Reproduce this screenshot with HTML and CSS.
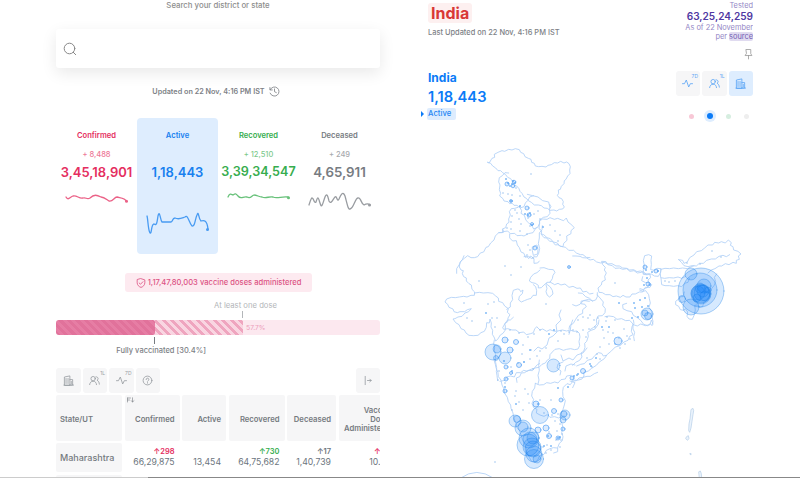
FILE: index.html
```html
<!DOCTYPE html>
<html lang="en">
<head>
<meta charset="utf-8">
<title>India – COVID-19 tracker</title>
<link rel="stylesheet" href="styles.css">
</head>
<body>
<svg width="0" height="0" class="defs">
  <defs>
    <symbol id="building" viewBox="0 0 12 12"><path d="M1.5 11V2.2L7.5 1v10zM7.5 5h3v6h-3M1 11h10.500M3.300 3.800v5.500M5.500 3.800v5.500M9 7v2.500"/></symbol>
    <symbol id="people" viewBox="0 0 12 12"><circle cx="4.500" cy="4" r="2.400"/><path d="M.7 10.500c.3-2.200 1.500-3.700 3.800-3.700s3.500 1.500 3.700 3.700M7.500 2c2.400-.5 3.500 2.800 1.200 3.800 1.500.5 2.400 1.900 2.600 4.200"/></symbol>
    <symbol id="pulse" viewBox="0 0 12 12"><path d="M.5 6.200h2.200l2-4 2.600 7.600 1.800-3.600h2.400"/></symbol>
  </defs>
</svg>
<main class="page">
  <section class="summary">
    <p class="search-label">Search your district or state</p>
    <div class="search">
      <svg class="search-icon" viewBox="0 0 14 14"><circle cx="6.500" cy="6.500" r="5.300"/><path d="M10.300 10.300l2.400 2.400"/></svg>
    </div>
    <div class="updated"><span>Updated on 22 Nov, 4:16 PM IST</span>
      <svg viewBox="0 0 12 12"><path d="M1.300 4A5 5 0 1 1 1.200 7.800M1 1.700v2.600h2.600M6 3.200v3l2 1"/></svg>
    </div>
    <div class="stats">
      <div class="stat confirmed"><h2>Confirmed</h2><small>+ 8,488</small><strong>3,45,18,901</strong>
        <svg viewBox="0 0 81 60"><path d="M10 9c2 4 4 0 7-1 4-1 6 3 10 2 3-1 4 2 7 0 4-4 7-3 11-1 3 0 5 2 8 4 4 1 5-4 8-4 4 1 8 1 9 4"/><circle cx="70.500" cy="13.300" r="1.500"/></svg></div>
      <div class="stat active"><h2>Active</h2><small>&nbsp;</small><strong>1,18,443</strong>
        <svg viewBox="0 0 81 60"><path d="M10 28c1 3 1 14 3 17 2 1 1-9 4-9 3 2 3-2 4-8 2-7 2 4 4 6h9c2 0 1-4 4-4 4 2 7 0 10-1 3-3 4 6 7 9 3 1 3-7 5-11 2-5 1 3 4 6 3-1 6-1 7 8"/><circle cx="70.500" cy="41.500" r="1.500"/></svg></div>
      <div class="stat recovered"><h2>Recovered</h2><small>+ 12,510</small><strong>3,39,34,547</strong>
        <svg viewBox="0 0 81 60"><path d="M10 9c2-5 4-2 5-2 3-2 3-1 5 1 3 4 5 0 9 1 4 2 4-1 7-2 3 0 5 2 8 2 4 2 7-1 11 0 4 2 9-1 15 0"/><circle cx="70.500" cy="9.800" r="1.500"/></svg></div>
      <div class="stat deceased"><h2>Deceased</h2><small>+ 249</small><strong>4,65,911</strong>
        <svg viewBox="0 0 81 60"><path d="M10 17c1-3 2-7 3-7 2 0 2 6 4 4 2-6 2-5 4 1 2 7 3-1 5-6 2-5 3 0 4 4 2 4 4-2 6-4 2-2 2 6 4 2 2-5 4-8 6-3 2 7 3 14 5 13 4-1 5-11 8-11 3-1 3 6 6 7 3-2 5-1 6 0"/><circle cx="70.500" cy="17" r="1.500"/></svg></div>
    </div>
    <div class="doses"><svg viewBox="0 0 12 12"><path d="M6 .8l4.600 1.500v3.400c0 2.800-2.200 4.800-4.600 5.600-2.400-.8-4.600-2.800-4.600-5.600V2.300zM3.800 6l1.600 1.500L8.300 4.500"/></svg><span>1,17,47,80,003 vaccine doses administered</span></div>
    <div class="progress">
      <div class="first-label"><span>At least one dose</span></div>
      <div class="bar"><div class="full"></div><div class="partial"></div><span>57.7%</span></div>
      <div class="full-label"><span>Fully vaccinated [30.4%]</span></div>
    </div>
    <div class="tools">
      <div class="tool"><svg><use href="#building"/></svg></div>
      <div class="tool"><svg><use href="#people"/></svg><i>1L</i></div>
      <div class="tool"><svg><use href="#pulse"/></svg><i>7D</i></div>
      <div class="tool"><svg viewBox="0 0 12 12"><circle cx="6" cy="6" r="4.800"/><path d="M4.500 5a1.500 1.500 0 1 1 2.300 1.200L6 7M6 8.300v.6"/></svg></div>
      <div class="tool expand"><svg viewBox="0 0 12 12"><path d="M3.500 1.500v9M6 6h4M8.500 4.500L10 6 8.500 7.500"/></svg></div>
    </div>
    <div class="table">
      <div class="head left">State/UT</div>
      <div class="head"><svg class="sort" viewBox="0 0 8 6"><path d="M.5 1h3M.5 3h2M.5 1v4M5.500.8v4M4.300 3.700l1.200 1.300L7 3.700"/></svg>Confirmed</div>
      <div class="head">Active</div><div class="head">Recovered</div><div class="head">Deceased</div><div class="head wide">Vaccine<br>Doses<br>Administered</div>
      <div class="name">Maharashtra</div>
      <div class="cell"><b class="red">↑298</b>66,29,875</div>
      <div class="cell"><b>&nbsp;</b>13,454</div>
      <div class="cell"><b class="green">↑730</b>64,75,682</div>
      <div class="cell"><b>↑17</b>1,40,739</div>
      <div class="cell vac"><b class="red">↑</b>10.</div>
      <div class="name next"></div>
    </div>
  </section>
  <section class="map-panel">
    <header>
      <div><h1>India</h1><p class="last">Last Updated on 22 Nov, 4:16 PM IST</p></div>
      <div class="tested"><span>Tested</span><strong>63,25,24,259</strong><span>As of 22 November</span><span>per <a>source</a></span></div>
    </header>
    <svg class="pin" viewBox="0 0 10 12"><path d="M2.500 1h5v4.700l1.300 2H1.200l1.300-2zM5 7.700v3.800"/></svg>
    <div class="region">
      <div class="region-text"><h3>India</h3><strong>1,18,443</strong><span class="tag">Active</span></div>
      <div class="controls">
        <div class="switches">
          <div class="tool"><svg><use href="#pulse"/></svg><i>7D</i></div>
          <div class="tool"><svg><use href="#people"/></svg><i>1L</i></div>
          <div class="tool on"><svg><use href="#building"/></svg></div>
        </div>
        <div class="dots"><i class="d1"></i><i class="d2"></i><i class="d3"></i><i class="d4"></i></div>
      </div>
    </div>
    <svg class="map" viewBox="428 125 325 353">
      <!-- North and north-west -->
      <g transform="translate(440 140) scale(.33333)">
        <path class="line" d="M148 68l8-13 8-3-1-9 11-6 12-5 8 2 12-6 10 2 10-4 12 3 4 8 9 4 4 9 10 5 8 3 2 9 8 3 3 8 10 2 10-1 12 2 6-5 10-2 9-6 10 1 9-5 10 5 8-3 7 5 4 9-2 10 1 11-7 7-5 10-5 4-1 9-8 8-3 9-6 2 1 10-4 6 5 7 8 3 5 9-2 8 5 8-5 6-10 1-8 5-8-3-12 1-8-6-10-1-8-7-9-2-12 0-9-8-9-5-6-7-7-4-6-11-6-6-3-8-7-8-7-4-5-9-6-9-9-4-6-8-9-6-6-6-8 0-7-8-9-6-6-8-9-3z"/>
        <path class="line" d="M206 99l-11-1-8 9-9 6-2 13 4 9-2 14 4 11-3 8 10 8 3 7 12 2 5 6 8-1 5 6 9 0 9 8 12-4 4-11 8-8 5-10 12-4M238 199l7 13-2 8 10 6 5 15 8 8 9 7 6 11 12-5 6-12-1-9 12-9 12-2 8-10-2-13 5-7-4-7M262 163l16 4 16 4 14 11 18 4 4 18"/>
        <path class="line" d="M234 202l-10 3-10 1-6 9 3 10-5 12 1 10-7 5-3 11-10 4 2 8 14-2 8 8 13-1 7 7 13-1 8 2 13-7 14-3 5-8 5-7M300 242l8-5 13 1 9-5 13 5 10-3 12 5 6 2 8-8 5 12 9 7 10 10-10 9 0 9-13 7 1 13-10 9-2 10-10-2-7-9-12-3-9-10-10-3-10-9-7-2 1-10-7-5zM190 270l-3 8-11 0-10 10-4 12-10 9-7 11-7 2-7 14-10 3-8 11-10 3-10 0-10-6-10 8-10 8-4 9-9 14 0 14M176 278l14-1M209 282l0 12 9 9 11-1 3 13 6 8 5 13 9 4 4 12 10-3 9 7 6-6 9 1 6-11 3-15-4-14 3-17 0-15 8-10 1-12M278 320l13-5 3 12-1 15-13 4-3-14zM252 350l8-2 6 8 6-8 10 8 0 14 11-1 5-6M303 282l9 11 8 1 9 10 8 0 9 11 8-1 8 5 15 3 9 9 15 0 8 8 12 5 8 0 10 8 11 1"/>
      </g>
      <!-- West and central -->
      <g transform="translate(440 250) scale(.33333)">
        <path class="line" d="M72 17l-5 12-7 8-2 14 5 9 7 2-3 9 4 9 8 4 0 9 8 8 7 4 2 13 8 8-1 10-10 0-12 5-10-2-13 2-12 2-12-1-14 5-5 9 8 7 4 9 12 5 3 8 10 3 8-3 14 0 8-6 12-3-8 9-11 4-9 10-12 2-9 5-6 1 8 11 10 6 6 12 10 4 5 9 9 7 13 1 14-1 9-8 10-4 6-12 1-14 8 1 2-12 4 12-1 12 5 10-1 12 5 8 5 12 6-5 8-13 8-5 7-10 0-12-2-7 9-11 8 0 9-8M104 129l14-2 12 2 14-1 14 2 9 8 8 6 1 10 12 4 6 10 11 8-3 11 8 7-6 10-1 11-9 7-6 11 3 5 12-2 13 4 12 0 10 8 13-2 8 8 13-3 8-3 4-11 6-7 10 10 8-3 12 7 10-5 13 5 10-1 14-3 13 3 10-3 11 4 10-1 7 7 2 11-3 14 2 12-5 10-10 2-12-3-12 2-10 3-12-5-13 2-8 8-7 8-1 12-7 4-6 9-10 4-9 9-12 2-8 8-13-1-10 7-10 1-5 11-10 4 2 13M200 178l11-7 0-12 7-10-2-13 4-15 12-4 6 1 4 7 7-5-2 11-9 8-2 11 8 6 9-4 10-4 10-3 6-9 10 0 1-14-3-12-7-6M300 54l12-1 14 5 14 1 5 8-6 9-2 10-7 11-9 0-3 8 3 10-3 10 4 11 7 5 10-9-2-11-6-10-9-7M300 60l-9 8-10 4-9 10-4 11 8 5 10 2 9 6 0 8 9-1 8-8 7-6M330 96l14 8 10-4 9 5 12-3 12 10 12-3 12 6 10-1 8 12 10-2 10 8 10-2M448 154l-13-2-11 1-2 8 13 2 4 7-11 9 0 11-13 6-8 12-7 12-11 7-2 10M163 270l-2 11 3 10-1 10 4 13-1 12 1 12 3 15-1 12 2 12 2 15"/>
      </g>
      <!-- South -->
      <g transform="translate(440 360) scale(.33333)">
        <path class="line" d="M162 0l4 13 2 10 6 15 1 12 8 10 3 15 6 12 2 13 8 12 3 13 7 10 1 10 6 14 2 15 6 14 3 13 8 10 5 14 4 13 6 13 5 10 2 15 8 16 7 12 10 3 9-8 4-11 14-5 7-12 11-5 10-3 12 1M341 279l12-4 0-12 5-13 9-8 2-12-4-13 4-14-3-12-5-14 1-15 7-14 4-13 3-13-7-12-1-16 2-12 11-11 10 3 7-10 11-2 8-8 12-2 12-3 10 0 12-8 10-4M286 70l-2 14-7 10-2 14 6 11-5 11 5 13 10 5-2 11 11 6 12 4 10-5 8 8 14-2 12 4 10-6 10 1M286 70l12 5 13-1 9-6 12 2 12-4 10 3 9-10 13-2 4-9 13-2M298 0l-2 16 2 15-4 15 3 14-3 12M180 64l14-3 6-10 12-3 11 3 6-13 13 0 9-7 11 3 8-5 12-4 10-11 7-3"/>
        <path class="line" d="M62 354q48-34 98 0"/>
      </g>
      <g transform="translate(580 310)">
        <path class="line" d="M-19 0l-2 5 2 5-5 5 1 7-4 4-4 2-2 7-5 4-4-2-4 4M-19 45l2 6 6-3 4 2 4-5 6-2 4-5M-17 52l-5 2-1 4 4 3-1 4M-15 61l1-5 5-2 4 1"/>
      </g>
      <!-- East and north-east -->
      <g transform="translate(580 200) scale(.33333)">
        <path class="line" d="M-22-34l10 0 12 1 8 4 12 1 10 6 10-2 10 8 12 3 12-2 8 5 14-1 12 7 10 0 10 6 13 1 8 5 12-1 10 6 10-2 10 3 8 7" transform="translate(0 202)"/>
        <path class="line" d="M66 184l12 1 6 9 13 3 8 8 13-1 10 4 12-2 10 8 12-2 10 7 13-2 10 5 14-1 3 12-8 7 3 10-4 12-10 4-5 10-10 0-12 6-10 0-6 9-12 0-9-5-8 6-12-4-10 2-9-6-13 0-10-6-10-1-3-13 10-9 2-10 10-5-2-11 5-10-6-9 3-8-7-7zM190 222l0-14 3-12-3-14 4-15 12-3 9 4-2 13 1 13-2 15 12 2 7-6 12 1-1 11-7 12-12-1-9-6-12 2zM188 230l-3 12 12 6 10-2 8 8-5 8-14 0-6 7-10-3M243 208l12-3 14 1 12-2 14 2 13-2 14 2 8-4 12-5M243 208l-2 12 1 13 12 2 14-2 13 1 13-3 11 4 12-6M243 234l2 20 10 3 13 0 13 2 12-2 12 3 9-10 10-3 4-12M296 179l12 2 4 9 10-4 7-13 13-8 8-10 14-3 10-8 10-9 14 0 6-8 12 2 8-4 12 4 9-9 9 8-3 8 8 4 2 10 13 4 9 8-8 6 3 10-9 3 0 9-10-3-12 7-11-3-11 7-8 0-12 8-11 4-10 9M296 179l9 9 7 9 12 3 12-3 13 1 9-8 12 0 10-9 14-4 12 0 11-8 12-3 10 4 10-6M410 222l-7 10 4 13-5 12-8 10-2 13-6 14-7 8-8 6-3 12-9 2-6-7-9 1 2 14-3 14-6 14-10-1-6-8 2-13-7-10-5 5-10-2-5-10-9-5 0-10 8-6 7-8 7 0 4-14"/>
        <path class="line" d="M52 278l0 12-5 10-10 3-8-8-12-5-10-10-12-1M52 285l8 9 10 12-2 10 8 10-1 12-8 9-13 1-5 12 2 12-10 10-11 7M75 350l12-2 14 2 10 8 14-2 12 6 12-1 10 11 0 15 5 10-3 13 2 12M140 310l-12 4 1 12 12 6 14 3 5 11 12 7 10 8 9 12 12 4 8-6 5 6 3-12-3-15-1-16-8-12 4-13-3-13-2-12-9-12-8 2-10-4M-22 314l10 4 12-5 10-11 16-4 12 5"/>
      </g>
      <!-- Odisha and the islands -->
      <g transform="translate(570 320) scale(.33333)">
        <path class="line" d="M8 0l-5 14-2 16-4 13M87 0l-2 13-10 14-12 4-10 6 2 12-5 15-6 6 1 12-4 12-8 5 3 12-7 10-12 6-9 9M190 0l2 10-6 10-2 14 5 10-10 5-5 12-12 5-12 11-14 4-14 14-10 8-9 13-15 10-9 10-14 9-10 8-14 5 1 10-6 9-14 4-15-1M190 14l12 4 10-6 14 5 14-3 4-14 5 12M8 203l7-15-15-5M20 138l12-5 11-2 9-10 14-4 9-11 10-8 10 2 5 8 9-2"/>
        <path class="island" d="M364 268l5-3 2 7-2 12-3 20-3 20-4 13-3-5 1-20 3-15zM350 350l5-3 2 8-4 6-5-4zM360 401l3-1v4zM387 455l4-2 3 8 1 14-6-2z"/>
      </g>
      <!-- Low district counts -->
      <path class="speck" d="M531 174h.01M503 193h.01M508 194h.01M512 195h.01M516 188h.01M520 196h.01M515 210h.01M512 216h.01M519 219h.01M528 218h.01M511 222h.01M521 224h.01M530 226h.01M511 229h.01M520 231h.01M527 234h.01M507 228h.01M517 213h.01M538 211h.01M534 214h.01M540 219h.01M550 225h.01M555 231h.01M560 235h.01M558 241h.01M528 245h.01M530 250h.01M527 255h.01M533 258h.01M505 266h.01M521 267h.01M511 275h.01M479 281h.01M464 303h.01M467 318h.01M472 321h.01M488 304h.01M494 302h.01M569 267h.01M546 304h.01M615 283h.01M492 318h.01M497 318h.01M495 327h.01M510 330h.01M519 333h.01M528 337h.01M534 334h.01M540 330h.01M523 345h.01M531 350h.01M540 351h.01M546 348h.01M522 354h.01M530 359h.01M537 356h.01M518 363h.01M524 362h.01M533 369h.01M511 367h.01M499 371h.01M558 341h.01M564 334h.01M569 332h.01M561 331h.01M573 330h.01M577 332h.01M583 330h.01M578 320h.01M583 317h.01M590 315h.01M589 329h.01M588 318h.01M594 320h.01M586 337h.01M595 327h.01M598 318h.01M603 330h.01M606 321h.01M608 332h.01M604 338h.01M609 344h.01M600 347h.01M615 344h.01M620 348h.01M619 338h.01M613 333h.01M624 329h.01M627 336h.01M625 344h.01M630 339h.01M615 320h.01M607 317h.01"/>
      <path class="speck" d="M498 380h.01M505 383h.01M516 391h.01M515 396h.01M525 389h.01M528 394h.01M519 402h.01M523 410h.01M512 410h.01M529 403h.01M551 400h.01M540 400h.01M544 413h.01M552 415h.01M558 414h.01M555 421h.01M560 424h.01M549 432h.01M557 431h.01M562 434h.01M556 440h.01M547 445h.01M551 450h.01M543 447h.01M546 453h.01M561 440h.01M560 447h.01M687 263h.01M700 264h.01M712 251h.01M721 257h.01M665 281h.01M669 282h.01M675 281h.01M600 359h.01M592 367h.01M587 358h.01M597 354h.01M495 462h.01"/>
      <path class="dot" d="M506 179h.01M508 183h.01M513 181h.01M510 186h.01M515 183h.01M512 184h.01M511 201h.01M520 206h.01M525 214h.01M530 213h.01M528 215h.01M532 225h.01M543 227h.01M486 313h.01M549 334h.01M554 330h.01M530 350h.01M504 361h.01M512 371h.01M524 362h.01M505 387h.01M516 404h.01M558 388h.01M538 404h.01M646 270h.01M652 272h.01M647 278h.01M650 285h.01M644 285h.01M634 303h.01M640 300h.01M645 298h.01M635 308h.01M638 317h.01M632 318h.01M642 307h.01M648 306h.01M619 303h.01M658 271h.01M602 327h.01M609 327h.01M591 366h.01M596 358h.01M577 375h.01M578 374h.01M574 376h.01M568 387h.01M590 364h.01M548 436h.01M560 437h.01M544 446h.01M551 446h.01M558 438h.01"/>
      <g class="small">
        <circle cx="507" cy="184" r="2"/><circle cx="514" cy="182" r="1.800"/><circle cx="513" cy="186" r="1.800"/><circle cx="527" cy="208" r="2"/><circle cx="529" cy="215" r="2"/><circle cx="532" cy="224" r="1.500"/><circle cx="535" cy="248" r="2"/><circle cx="511" cy="201" r="1.500"/><circle cx="505" cy="340" r="3"/><circle cx="516" cy="342" r="2.500"/><circle cx="510" cy="350" r="3"/><circle cx="506" cy="367" r="2"/><circle cx="519" cy="365" r="2.500"/><circle cx="511" cy="373" r="1.500"/><circle cx="506" cy="379" r="2"/><circle cx="505" cy="391" r="2"/><circle cx="561" cy="400" r="2"/><circle cx="536" cy="404" r="3"/><circle cx="554" cy="411" r="2.500"/><circle cx="538" cy="430" r="3"/><circle cx="546" cy="428" r="3"/><circle cx="549" cy="436" r="2.500"/><circle cx="563" cy="429" r="2"/><circle cx="558" cy="438" r="2"/><circle cx="645" cy="267" r="2"/><circle cx="656" cy="271" r="2"/><circle cx="648" cy="284" r="2"/><circle cx="583" cy="371" r="2.500"/><circle cx="572" cy="378" r="2"/><circle cx="618" cy="341" r="4"/><circle cx="569" cy="267" r="1.500"/>
      </g>
      <g class="bubble">
        <circle cx="493" cy="352" r="8"/><circle cx="497" cy="349" r="4"/><circle cx="496" cy="358" r="2.500"/><circle cx="505" cy="358" r="6"/><circle cx="553.500" cy="365.500" r="6.500"/>
        <circle cx="647" cy="314" r="6"/><circle cx="648" cy="316" r="3.500"/><circle cx="645" cy="313" r="3"/>
        <circle cx="701" cy="291" r="23"/><circle cx="700" cy="290" r="17"/><circle cx="691" cy="274" r="6"/><circle cx="691" cy="307" r="8"/><circle cx="682" cy="299" r="3.500"/><circle cx="701" cy="294" r="10"/><circle cx="704" cy="286" r="7"/><circle cx="698" cy="293" r="7"/><circle cx="702" cy="293" r="8"/><circle cx="705" cy="296" r="5"/><circle cx="700" cy="288" r="5"/><circle cx="708" cy="290" r="3"/><circle cx="697" cy="298" r="4"/><circle cx="703" cy="291" r="6"/><circle cx="701" cy="294" r="9"/>
        <circle cx="515" cy="421" r="6"/><circle cx="517" cy="419" r="3.500"/><circle cx="523" cy="428" r="8"/><circle cx="523" cy="427" r="5"/><circle cx="529" cy="438" r="10"/><circle cx="530" cy="439" r="7"/><circle cx="528" cy="445" r="11"/><circle cx="532" cy="447" r="9"/><circle cx="533" cy="449" r="8"/><circle cx="533" cy="438" r="6"/><circle cx="534" cy="459" r="9.500"/><circle cx="534" cy="454" r="8"/><circle cx="537" cy="459" r="4"/><circle cx="540" cy="415" r="8.500"/><circle cx="565" cy="415" r="5"/><circle cx="563" cy="420" r="3"/><circle cx="564" cy="414" r="3"/>
      </g>
    </svg>
  </section>
</main>
<div class="scroll"><div></div></div>
</body>
</html>
```
FILE: styles.css
```css
* { box-sizing: border-box; }
body { margin: 0; width: 800px; height: 478px; overflow: hidden; display: flex; flex-direction: column; background: #fff; font-family: Inter, "Liberation Sans", sans-serif; color: #6c757d; }
h1, h2, h3, p { margin: 0; }
svg { fill: none; stroke: currentColor; display: block; flex: none; stroke-linecap: round; stroke-linejoin: round; }
.defs { position: absolute; }
.page { height: 477px; display: grid; grid-template-columns: 324px 333px; column-gap: 40px; padding-left: 56px; overflow: hidden; }
.summary { min-width: 0; height: 477px; }
.search-label { height: 11px; line-height: 11px; text-align: center; font-size: 7.800px; font-weight: 500; color: #8d8d8d; }
.search { margin-top: 18px; height: 39px; border-radius: 3px; display: flex; align-items: center; padding-left: 7px; box-shadow: 0 5px 16px rgba(0,0,0,.09); }
.search-icon { width: 14px; height: 14px; color: #888; }
.updated { margin-top: 15px; height: 17px; display: flex; align-items: center; justify-content: center; gap: 4px; padding-right: 4px; font-size: 7.250px; font-weight: 600; color: #7d8186; }
.updated svg { width: 11px; height: 11px; stroke-width: .9; }
.stats { margin-top: 18px; height: 136px; display: grid; grid-template-columns: repeat(4, 81px); }
.stat { border-radius: 4px; display: flex; flex-direction: column; align-items: center; padding-top: 12px; height: 136px; white-space: nowrap; }
.stat h2 { font-size: 7.600px; line-height: 10px; font-weight: 600; margin-top: .5px; }
.stat small { font-size: 7.500px; line-height: 10px; margin-top: 9.500px; font-weight: 500; opacity: .65; }
.stat strong { font-size: 13px; line-height: 16px; margin-top: 4px; font-weight: 600; }
.stat svg { width: 81px; height: 60px; margin-top: 8px; opacity: .75; stroke-width: 1.300; }
.stat circle { fill: currentColor; stroke: none; }
.confirmed { color: #e52e60; }
.active { color: #1780ef; background: #deedfe; }
.recovered { color: #36ad4e; }
.recovered strong { font-size: 12.600px; }
.deceased { color: #777c82; }
.deceased strong { font-size: 13.300px; }
.doses { width: 187px; height: 19px; margin: 19px auto 0 69px; border-radius: 3px; background: #fdeaf0; color: #dc5484; display: flex; align-items: center; justify-content: center; gap: 2px; font-size: 7.600px; font-weight: 500; white-space: nowrap; }
.doses svg { width: 10px; height: 10px; }
.progress { height: 75px; padding-top: 8px; font-size: 7.700px; line-height: 10px; white-space: nowrap; }
.first-label { width: 187px; height: 20px; display: flex; flex-direction: column; align-items: flex-end; color: #b3b6b9; }
.first-label span { margin: 1px -34px 0 0; }
.first-label::after { content: ""; width: 1px; height: 7px; background: #b3b6b9; }
.bar { height: 15px; background: #fce8ef; border-radius: 3px; display: flex; align-items: center; overflow: hidden; color: #ec9ebb; font-size: 6.800px; }
.full, .partial { height: 15px; background: repeating-linear-gradient(45deg, #e1729b 0 3px, #e67da4 3px 6px); }
.full { width: 98.500px; border-radius: 0 2px 2px 0; }
.partial { width: 88.500px; margin-right: 3px; background: repeating-linear-gradient(45deg, #f9d5e1 0 3px, #efa5bf 3px 6px); }
.full-label { width: 99px; display: flex; flex-direction: column; align-items: flex-end; color: #7d8186; font-size: 7.500px; font-weight: 500; }
.full-label::before { content: ""; width: 1px; height: 7px; margin: 2px 0; background: #777b80; }
.full-label span { margin-right: -51px; }
.tools { height: 25px; display: flex; gap: 2px; margin-top: .5px; }
.tool { position: relative; width: 24.500px; height: 25px; border-radius: 3px; background: #f6f6f7; color: #989da2; display: grid; place-items: center; }
.tool svg { width: 11px; height: 11px; stroke-width: .9; }
.tool i { position: absolute; right: 2px; top: 2px; font-size: 5px; line-height: 6px; font-style: normal; }
.tool.expand { margin-left: auto; }
.table { margin-top: 2px; display: grid; grid-template-columns: 66px 55px 44px 56px 49px 80px; grid-template-rows: 46px 29px 5px; gap: 2.500px; width: 324px; overflow: hidden; }
.head, .name { background: #f6f6f7; border-radius: 2px; display: flex; align-items: center; justify-content: flex-end; padding-right: 5px; font-size: 7.700px; font-weight: 600; color: #757a7f; line-height: 9px; text-align: right; position: relative; padding-top: 4px; }
.head.left, .name { justify-content: flex-start; padding-left: 4px; }
.name { padding: 0 0 0 4px; font-size: 9px; font-weight: 500; }
.name.next { grid-column: 1; }
.head.wide { padding-right: 25px; }
.sort { position: absolute; width: 8px; height: 6px; left: 2px; top: 2px; stroke-width: .6; }
.cell { padding: 4px 5px 0 0; text-align: right; font-size: 8.700px; line-height: 10px; white-space: nowrap; }
.cell b { display: block; font-size: 7.500px; line-height: 10px; font-weight: 600; }
.vac { padding-right: 38px; }
.red { color: #e52e60; }
.green { color: #36ad4e; }
.map-panel { height: 477px; overflow: hidden; padding-left: 8px; }
header { height: 45px; display: flex; justify-content: space-between; }
h1 { width: 44px; height: 20px; margin: 3px 0 0; padding-left: 3px; line-height: 20px; font-size: 16px; font-weight: 700; color: #d93836; background: #fdf0f0; border-radius: 3px; }
.last { margin-top: 5px; font-size: 7.450px; line-height: 10px; font-weight: 500; color: #7d8186; white-space: nowrap; }
.tested { display: flex; flex-direction: column; align-items: flex-end; color: #9487c6; font-size: 7.400px; line-height: 9px; padding-top: 1px; }
.tested strong { font-size: 10.100px; line-height: 13px; font-weight: 600; color: #5038a2; }
.tested a { background: #e0dbf0; border-radius: 2px; color: #7461b5; }
.pin { width: 9px; height: 12px; margin: 3px 0 0 auto; color: #999; stroke-width: .9; }
.region { margin-top: 10px; height: 55px; display: flex; justify-content: space-between; color: #0b7bf7; }
.region-text { display: flex; flex-direction: column; align-items: flex-start; }
h3 { font-size: 12px; line-height: 15px; font-weight: 700; }
.region-text strong { font-size: 14.700px; line-height: 18px; margin-top: 3px; font-weight: 600; }
.tag { position: relative; margin-left: -1px; width: 29px; height: 12px; margin-top: 2px; padding-left: 1px; font-size: 7.700px; line-height: 12px; font-weight: 500; color: #2586f4; background: #ddecfe; border-radius: 2px; }
.tag::before { content: ""; position: absolute; left: -6px; top: 3px; border: 3px solid transparent; border-left-color: #0b7bf7; border-right: 0; }
.switches { display: flex; gap: 2px; padding-top: 1px; }
.switches .tool { color: #5ba5f5; }
.switches .on { background: #deedfe; }
.dots { height: 12px; margin: 14px 0 0 13px; display: flex; align-items: center; justify-content: space-between; width: 60px; }
.dots i { width: 5px; height: 5px; border-radius: 50%; background: #f8c8d6; }
.dots .d2 { width: 6px; height: 6px; background: #0b7bf7; box-shadow: 0 0 0 3px #deedfe; }
.dots .d3 { background: #d6eee0; }
.dots .d4 { background: #eee; }
.map { width: 325px; height: 353px; }
.map path, .map circle { vector-effect: non-scaling-stroke; }
.line { stroke: #b0d0f7; stroke-width: .85; }
.island { stroke: #b6cfe8; stroke-width: .7; fill: #eaf3fc; }
.speck { stroke: #94bfee; stroke-width: 1.500; }
.dot { stroke: #68adf5; stroke-width: 2.200; opacity: .75; }
.small { stroke: #5ba5f5; stroke-width: .7; fill: rgba(11,123,247,.15); }
.bubble { stroke: rgba(30,130,230,.45); stroke-width: .8; fill: rgba(11,123,247,.17); }
.scroll { height: 1px; background: #ccc; }
.scroll div { height: 1px; margin-left: 148px; background: #888; }
```
